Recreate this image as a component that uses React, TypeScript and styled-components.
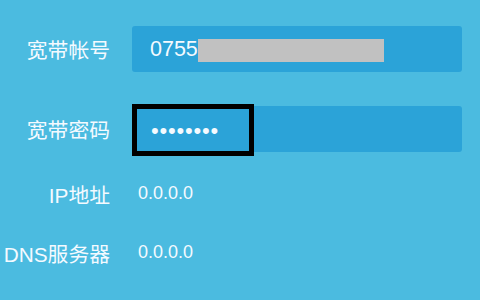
import styled, { createGlobalStyle } from 'styled-components';

const GlobalStyle = createGlobalStyle`
	html, body {
		margin: 0;
		padding: 0;
		background: #4bbbe0;
	}
	body {
		font-family: 'Liberation Sans', 'Noto Sans CJK SC', sans-serif;
		color: #f4faff;
	}
`;

export default function App() {
	return (
		<>
			<GlobalStyle />
			<Page>
				<Row $height={46} $after={34}>
					<Label>宽带帐号</Label>
					<Field>
						0755
						<Masked />
					</Field>
				</Row>

				<Row $height={46} $after={12}>
					<Label>宽带密码</Label>
					<Field>
						<Dots>••••••••</Dots>
						<Highlight />
					</Field>
				</Row>

				<Row $height={59}>
					<Label>IP地址</Label>
					<Value>0.0.0.0</Value>
				</Row>

				<Row $height={59}>
					<Label>DNS服务器</Label>
					<Value>0.0.0.0</Value>
				</Row>
			</Page>
		</>
	);
}

const Page = styled.div`
	width: 480px;
	height: 300px;
	box-sizing: border-box;
	padding: 26px 18px 0 0;
	overflow: hidden;
`;

const Row = styled.div<{ $height: number; $after?: number }>`
	display: flex;
	align-items: center;
	gap: 22px;
	height: ${(p) => p.$height}px;
	margin-bottom: ${(p) => p.$after || 0}px;
`;

const Label = styled.div`
	width: 110px;
	flex-shrink: 0;
	text-align: right;
	font-size: 20.8px;
	white-space: nowrap;
	color: #f4faff;
`;

const Field = styled.div`
	position: relative;
	flex: 1;
	height: 100%;
	display: flex;
	align-items: center;
	padding-left: 18px;
	border-radius: 3px;
	background: #2ba3d8;
	font-size: 21.5px;
	color: #f4faff;
`;

const Masked = styled.span`
	display: inline-block;
	width: 186px;
	height: 23px;
	margin-top: 3px;
	background: #c1c1c1;
`;

const Dots = styled.span`
	font-size: 22px;
	letter-spacing: 0.8px;
	margin-left: 1px;
	margin-top: 3px;
`;

const Highlight = styled.div`
	position: absolute;
	left: 0;
	top: -2px;
	width: 122px;
	height: 52px;
	box-sizing: border-box;
	border: 5px solid #000;
`;

const Value = styled.div`
	padding-left: 6px;
	font-size: 18px;
	color: #f4faff;
`;
